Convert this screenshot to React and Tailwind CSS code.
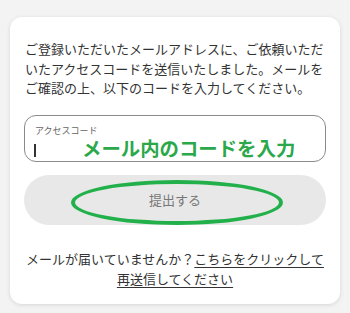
export default function App() {
  return (
    <div
      className="w-[350px] h-[313px] bg-[#f3f3f3] pt-[17px] px-[10px]"
      style={{ fontFamily: '"Noto Sans CJK JP", "Noto Sans", sans-serif' }}
    >
      <div className="bg-white rounded-[12px] shadow-[0_1px_4px_rgba(0,0,0,0.12)] h-[287px] px-[14px] pt-[22px] flex flex-col">
        <p className="text-[13px] leading-[19.5px] text-[#333] px-[1px]">
          ご登録いただいたメールアドレスに、ご依頼いただいたアクセスコードを送信いたしました。メールをご確認の上、以下のコードを入力してください。
        </p>

        {/* input */}
        <div className="relative mt-[17px] h-[47px] border border-[#8a8a8a] rounded-[12px] flex flex-col pl-[9px] pt-[10px] gap-[9px]">
          <span className="pl-[1px] text-[9px] leading-none text-[#666]">アクセスコード</span>
          <span className="w-[1.5px] h-[13px] bg-[#333]" />
          {/* annotation overlay */}
          <span className="absolute left-[57px] top-[20px] text-[19.4px] leading-[24px] font-bold text-[#2ba84a] whitespace-nowrap">
            メール内のコードを入力
          </span>
        </div>

        {/* button */}
        <div className="relative mt-[13px] h-[50px] bg-[#e8e8e8] rounded-full flex items-center justify-center">
          <span className="text-[13px] text-[#777]">提出する</span>
          <div className="absolute left-[47px] top-[5px] w-[212px] h-[45px] border-[4px] border-[#22b04b] rounded-[50%]" />
        </div>

        <p className="mt-[24px] text-[13px] leading-[20px] text-[#333] text-center">
          メールが届いていませんか？
          <span className="underline underline-offset-[3px]">こちらをクリックして再送信してください</span>
        </p>
      </div>
    </div>
  );
}
